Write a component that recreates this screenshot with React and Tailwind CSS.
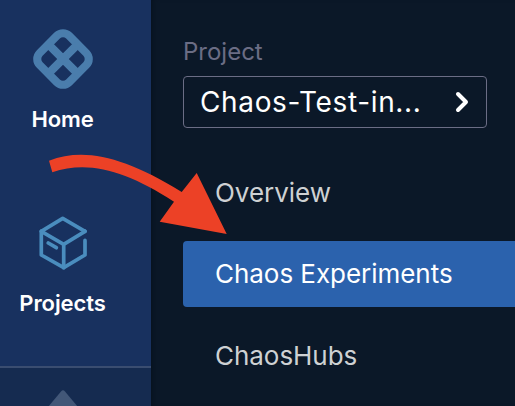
function HomeIcon() {
  return (
    <svg width="62" height="62" viewBox="-31 -31 62 62" fill="none" stroke="#4a7dac">
      <g transform="rotate(45)">
        <rect x="-20.7" y="-20.7" width="41.4" height="41.4" rx="8.5" strokeWidth="8.1" />
        <path d="M-20 0H20M0-20V20" strokeWidth="8.2" />
      </g>
    </svg>
  );
}

function ProjectsIcon() {
  return (
    <svg
      width="50"
      height="54"
      viewBox="37 216 50 54"
      fill="none"
      stroke="#4a8dbe"
      strokeWidth="3.7"
      strokeLinecap="round"
      strokeLinejoin="round"
    >
      <path d="M85 231.3L62.7 218.3L41.3 231.3V255L63.7 267.7L85 255V240.4" />
      <path d="M41.3 231.3L63.7 244.3L85 231.3M63.7 244.3V267.7M48.3 243L56.3 247.7" />
    </svg>
  );
}

export default function App() {
  return (
    <div className="relative flex h-[406px] w-[515px] overflow-hidden bg-[#0b1828] font-['Inter',sans-serif]">
      <aside className="flex w-[151px] shrink-0 flex-col bg-[#18315f] text-[22px] font-semibold leading-7 tracking-[-0.1px] text-white">
        <div className="flex h-[366px] shrink-0 flex-col items-center pr-[26px] pt-7">
          <HomeIcon />
          <span className="mt-[15px]">Home</span>
          <div className="mt-[83px] flex flex-col items-center">
            <ProjectsIcon />
            <span className="mt-[19px]">Projects</span>
          </div>
        </div>
        <div className="flex flex-1 justify-center border-t-2 border-[#3a4d70] bg-[#152b50] pr-[26px] pt-[22px]">
          <svg width="32" height="16" viewBox="0 0 32 16" fill="#425778">
            <path d="M1 17L14 1.5Q16-.8 18 1.5L31 17Z" />
          </svg>
        </div>
      </aside>
      <main className="flex min-w-0 flex-1 flex-col pl-8 pt-9 shadow-[inset_6px_0_6px_-5px_#06101c]">
        <span className="text-2xl leading-8 text-[#6b6d85]">Project</span>
        <div className="mt-2 flex h-[52px] w-[304px] items-center justify-between rounded border border-[#6b6d85] pl-4 pr-[17px] text-[28px] tracking-[0.65px] text-white">
          <span>Chaos-Test-in...</span>
          <svg width="15" height="22" viewBox="0 0 15 22" fill="none" stroke="white" strokeWidth="4" strokeLinecap="round" strokeLinejoin="round">
            <path d="M4 3L12 11L4 19" />
          </svg>
        </div>
        <nav className="mt-8 flex flex-col text-[26px] tracking-[-0.04px] text-[#ced1d3]">
          <a className="flex h-[66px] items-center pb-0.5 pl-8">Overview</a>
          <a className="mt-[15px] flex h-[66px] items-center rounded-l bg-[#2b62ad] pb-0.5 pl-8 text-white">Chaos Experiments</a>
          <a className="mt-4 flex h-[66px] items-center pb-0.5 pl-8">ChaosHubs</a>
        </nav>
      </main>
      <svg className="pointer-events-none absolute inset-0" width="515" height="406" fill="#ec4126">
        <path d="M49 160.7C84 147.500 123 156 181.700 192L196.700 173L226.700 234L159.700 221.700L174 201.700C126 171 89 160 52.300 172.300Z" />
      </svg>
    </div>
  );
}
